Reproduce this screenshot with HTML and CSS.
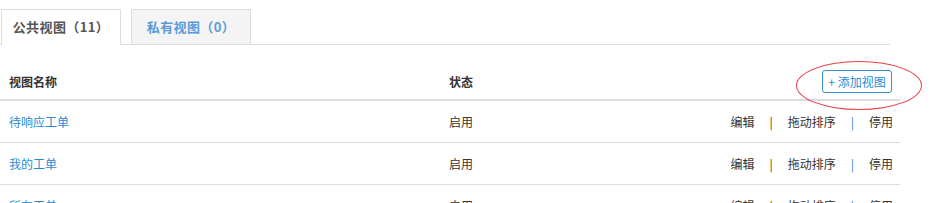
FILE: index.html
```html
<!DOCTYPE html>
<html lang="zh-CN">
<head>
    <meta charset="UTF-8">
    <title>视图管理</title>
    <link rel="stylesheet" href="styles.css">
</head>
<body>
    <div class="tabs">
        <div class="tab active">公共视图（11）</div>
        <div class="tab">私有视图（0）</div>
    </div>

    <div class="view-table">
        <div class="row head">
            <div class="col-name">视图名称</div>
            <div class="col-state">状态</div>
            <div class="col-ops">
                <span class="btn-add">+ 添加视图<span class="mark"></span></span>
            </div>
        </div>
        <div class="row">
            <div class="col-name"><a href="#">待响应工单</a></div>
            <div class="col-state">启用</div>
            <div class="col-ops">编辑<span class="sep">|</span>拖动排序<span class="sep blue">|</span>停用</div>
        </div>
        <div class="row">
            <div class="col-name"><a href="#">我的工单</a></div>
            <div class="col-state">启用</div>
            <div class="col-ops">编辑<span class="sep">|</span>拖动排序<span class="sep blue">|</span>停用</div>
        </div>
        <div class="row">
            <div class="col-name"><a href="#">所有工单</a></div>
            <div class="col-state">启用</div>
            <div class="col-ops">编辑<span class="sep">|</span>拖动排序<span class="sep blue">|</span>停用</div>
        </div>
    </div>
</body>
</html>
```

FILE: styles.css
```css
body {
    margin: 0;
    padding: 0;
    background: #fff;
    font-family: "Noto Sans CJK SC", "Noto Sans", sans-serif;
    font-size: 12px;
    color: #333;
}

.tabs {
    width: 889px;
    padding: 9px 0 0 1px;
    border-bottom: 1px solid #ddd;
    display: flex;
    gap: 10px;
}

.tab {
    width: 118px;
    height: 34px;
    line-height: 34px;
    text-align: center;
    font-size: 13px;
    font-weight: bold;
    letter-spacing: 0.4px;
    color: #5b9ad6;
    background: #f4f4f4;
    border: 1px solid #ddd;
    border-bottom: none;
}

.tab.active {
    color: #555;
    background: #fff;
    height: 35px;
    margin-bottom: -1px;
}

.view-table {
    width: 900px;
    margin-top: 19px;
}

.row {
    display: grid;
    grid-template-columns: 449px 1fr auto;
    align-items: center;
    height: 41px;
    border-bottom: 1px solid #ddd;
}

.row.head {
    height: 35px;
    border-bottom: 2px solid #ddd;
    font-weight: bold;
}

.col-name {
    padding-left: 9px;
}

.col-name a {
    color: #2a8bd5;
    text-decoration: none;
}

.col-ops {
    padding-right: 7px;
    text-align: right;
}

.head .col-ops {
    padding-right: 8px;
    font-weight: normal;
}

.sep {
    margin: 0 15px;
    color: #4a4300;
}

.sep.blue {
    color: #3d7fc4;
}

.btn-add {
    display: inline-block;
    position: relative;
    width: 68px;
    height: 21px;
    line-height: 21px;
    text-align: center;
    border: 1px solid #3a8fd2;
    border-radius: 3px;
    color: #2a8bd5;
}

/* red oval mark around the button */
.mark {
    position: absolute;
    left: -27px;
    top: -10px;
    width: 124px;
    height: 47px;
    border: 1px solid #e8404a;
    border-radius: 50%;
}
```
